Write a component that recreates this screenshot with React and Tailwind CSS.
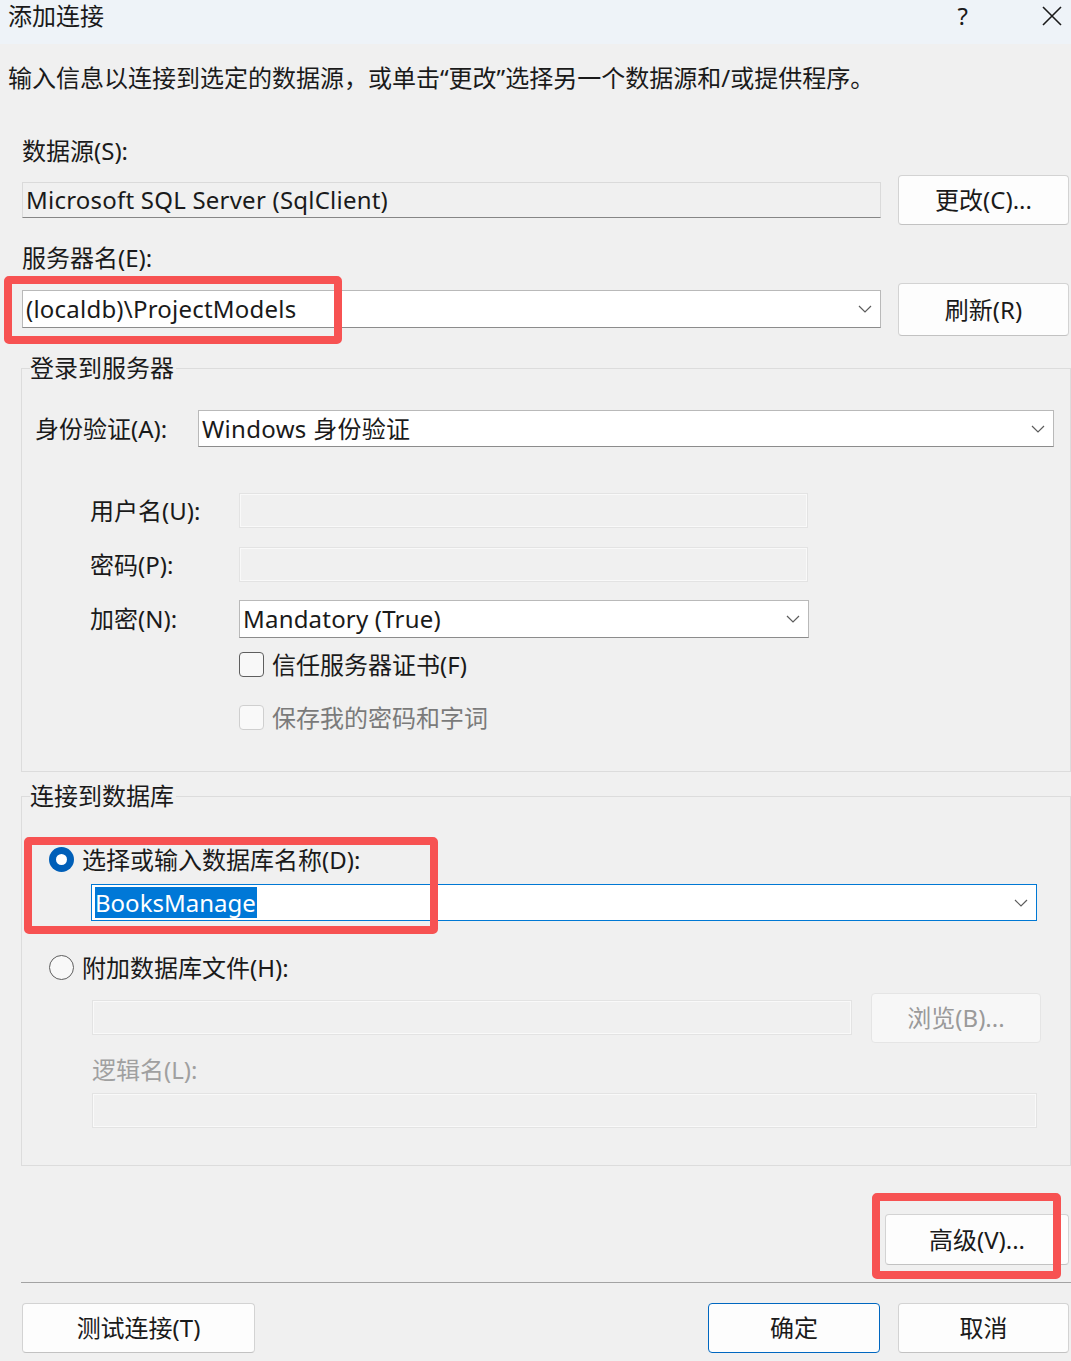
import React from 'react'

const Chevron = () => (
  <svg width="14" height="8" viewBox="0 0 14 8" className="shrink-0">
    <path d="M1 1 L7 7 L13 1" fill="none" stroke="#5c5c5c" strokeWidth="1.2" />
  </svg>
)

const Btn = ({ children, className = '', primary, disabled }) => (
  <div
    className={`flex items-center justify-center rounded-[4px] border shrink-0 ${
      primary
        ? 'border-[#0067c0] bg-[#fdfdfd]'
        : disabled
        ? 'border-[#e5e5e5] bg-[#f7f7f7] text-[#9a9a9a]'
        : 'border-[#d3d3d3] border-b-[#c2c2c2] bg-[#fdfdfd]'
    } ${className}`}
  >
    {children}
  </div>
)

const Combo = ({ children, className = '', focused }) => (
  <div
    className={`flex items-center bg-white border pl-[3px] pr-[8px] ${
      focused ? 'border-[#0078d4]' : 'border-[#b9b9b9] border-b-[#8c8c8c]'
    } ${className}`}
  >
    <div className="flex-1 min-w-0 flex items-center">{children}</div>
    <Chevron />
  </div>
)

const TextBox = ({ className = '' }) => (
  <div className={`bg-[#f0f0f0] border border-[#e3e3e3] shadow-[inset_0_0_0_1px_#f9f9f9] ${className}`} />
)

const Check = ({ disabled, label }) => (
  <div className="flex items-center h-[25px]">
    <div
      className={`w-[25px] h-[25px] rounded-[4px] border ${
        disabled ? 'border-[#cfcfcf] bg-[#f9f9f9]' : 'border-[#5e5e5e] bg-[#f8f8f8]'
      }`}
    />
    <span className={`ml-[8px] ${disabled ? 'text-[#7a7a7a]' : ''}`}>{label}</span>
  </div>
)

const Radio = ({ checked, label }) => (
  <div className="flex items-center h-[25px]">
    {checked ? (
      <div className="w-[25px] h-[25px] rounded-full bg-[#005fb8] flex items-center justify-center">
        <div className="w-[11px] h-[11px] rounded-full bg-white" />
      </div>
    ) : (
      <div className="w-[25px] h-[25px] rounded-full border border-[#5e5e5e] bg-[#f8f8f8]" />
    )}
    <span className="ml-[8px]">{label}</span>
  </div>
)

// red annotation frame drawn over the screenshot
const Mark = ({ className }) => (
  <div className={`absolute border-[8px] border-[#f75252] rounded-[5px] pointer-events-none ${className}`} />
)

const GroupBox = ({ title, className = '', children }) => (
  <div className={`relative ml-[21px] w-[1050px] border border-[#dcdcdc] ${className}`}>
    <span className="absolute -top-[17px] left-[8px] bg-[#f0f0f0] pr-[2px] leading-[32px]">{title}</span>
    {children}
  </div>
)

export default function App() {
  return (
    <div className="w-[1071px] h-[1361px] overflow-hidden bg-[#f0f0f0] text-[24px] leading-[32px] text-[#1a1a1a] font-['Noto_Sans','Noto_Sans_CJK_SC',sans-serif]">
      {/* Title bar */}
      <div className="h-[44px] bg-[#eef3f8] flex items-start pl-[8px]">
        <span>添加连接</span>
        <span className="ml-auto mr-[74px]">?</span>
        <svg width="20" height="20" viewBox="0 0 20 20" className="mt-[6px] mr-[9px]">
          <path d="M1 1 L19 19 M19 1 L1 19" stroke="#1a1a1a" strokeWidth="1.6" />
        </svg>
      </div>

      <p className="mt-[18px] pl-[8px] whitespace-nowrap">
        输入信息以连接到选定的数据源，或单击“更改”选择另一个数据源和/或提供程序。
      </p>

      <div className="pl-[22px]">
        <p className="mt-[41px]">数据源(S):</p>
        <div className="mt-[8px] flex items-start">
          <div className="mt-[7px] w-[859px] h-[36px] border border-[#dadada] border-b-[#868686] bg-[#f0f0f0] flex items-center pl-[3px] tracking-[0.22px]">
            Microsoft SQL Server (SqlClient)
          </div>
          <Btn className="ml-[17px] w-[171px] h-[50px]">更改(C)...</Btn>
        </div>

        <p className="mt-[17px]">服务器名(E):</p>
        <div className="relative mt-[9px] flex items-start">
          <Combo className="mt-[7px] w-[859px] h-[38px]">
            <span className="tracking-[0.22px]">(localdb)\ProjectModels</span>
          </Combo>
          <Btn className="ml-[17px] w-[171px] h-[53px]">刷新(R)</Btn>
          <Mark className="-left-[18px] -top-[7px] w-[338px] h-[68px]" />
        </div>
      </div>

      {/* 登录到服务器 */}
      <GroupBox title="登录到服务器" className="mt-[32px] h-[404px]">
        <div className="flex items-center mt-[41px] pl-[13px]">
          <span className="w-[163px]">身份验证(A):</span>
          <Combo className="w-[856px] h-[37px]">
            <span className="tracking-[0.3px]">Windows 身份验证</span>
          </Combo>
        </div>
        <div className="flex items-center mt-[46px] pl-[68px]">
          <span className="w-[149px]">用户名(U):</span>
          <TextBox className="w-[569px] h-[35px]" />
        </div>
        <div className="flex items-center mt-[19px] pl-[68px]">
          <span className="w-[149px]">密码(P):</span>
          <TextBox className="w-[569px] h-[35px]" />
        </div>
        <div className="flex items-center mt-[18px] pl-[68px]">
          <span className="w-[149px]">加密(N):</span>
          <Combo className="w-[570px] h-[38px]">
            <span className="tracking-[0.2px]">Mandatory (True)</span>
          </Combo>
        </div>
        <div className="mt-[14px] pl-[217px]">
          <Check label="信任服务器证书(F)" />
        </div>
        <div className="mt-[28px] pl-[217px]">
          <Check disabled label="保存我的密码和字词" />
        </div>
      </GroupBox>

      {/* 连接到数据库 */}
      <GroupBox title="连接到数据库" className="mt-[24px] h-[370px]">
        <div className="mt-[50px] pl-[27px]">
          <Radio checked label="选择或输入数据库名称(D):" />
        </div>
        <Combo focused className="mt-[12px] ml-[69px] w-[946px] h-[37px] pl-[2px]">
          <span className="bg-[#0078d7] text-white leading-[31px] pr-[1px]">BooksManage</span>
        </Combo>
        <div className="mt-[34px] pl-[27px]">
          <Radio label="附加数据库文件(H):" />
        </div>
        <div className="mt-[13px] flex items-start">
          <TextBox className="mt-[7px] ml-[70px] w-[760px] h-[35px]" />
          <Btn disabled className="ml-[19px] w-[170px] h-[50px]">浏览(B)...</Btn>
        </div>
        <p className="mt-[11px] ml-[70px] text-[#a0a0a0]">逻辑名(L):</p>
        <TextBox className="mt-[7px] ml-[70px] w-[945px] h-[35px]" />
        <Mark className="left-[2px] top-[40px] w-[414px] h-[97px]" />
      </GroupBox>

      <div className="mt-[48px] flex justify-end">
        <div className="relative">
          <Btn className="w-[184px] h-[51px] mr-[2px]">高级(V)...</Btn>
          <Mark className="-left-[13px] -top-[21px] w-[189px] h-[86px]" />
        </div>
      </div>

      <div className="mt-[17px] ml-[21px] h-px bg-[#a3a3a3]" />

      <div className="mt-[20px] flex items-start pl-[22px]">
        <Btn className="w-[233px] h-[50px]">测试连接(T)</Btn>
        <Btn primary className="ml-[453px] w-[172px] h-[50px]">确定</Btn>
        <Btn className="ml-[18px] w-[171px] h-[50px]">取消</Btn>
      </div>
    </div>
  )
}
